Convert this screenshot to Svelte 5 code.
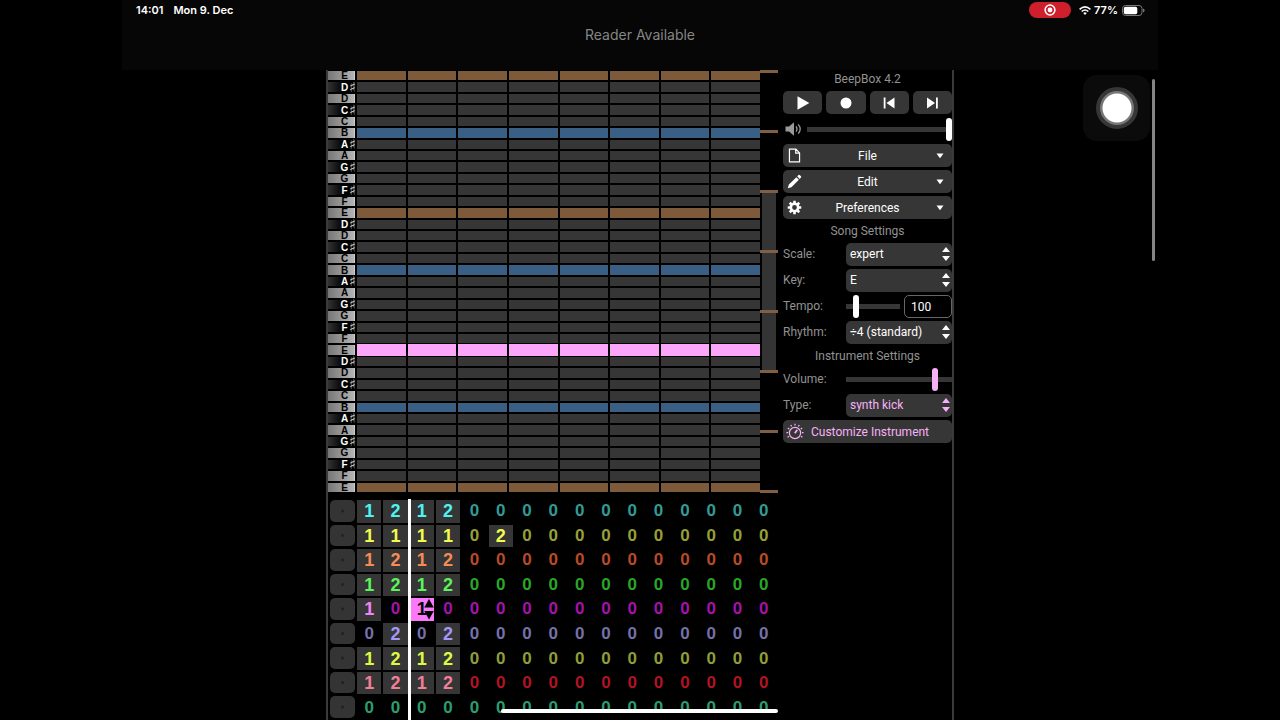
<script>
  const octave = ['E', 'D♯', 'D', 'C♯', 'C', 'B', 'A♯', 'A', 'G♯', 'G', 'F♯', 'F'];
  const keys = [...octave, ...octave, ...octave, 'E'];
  const beats = Array.from({ length: 8 }, (_, i) => i);
  const octaveGaps = Array.from({ length: 7 }, (_, i) => i);

  function rowKind(name, i) {
    if (i === 24) return 'pin';
    if (name === 'E') return 'root';
    if (name === 'B') return 'fifth';
    return '';
  }

  const channels = [
    { dim: '#329a94', bright: '#4df3f3', bars: '1212' },
    { dim: '#979f35', bright: '#f2fb4e', bars: '111102' },
    { dim: '#b84b27', bright: '#f68b55', bars: '1212' },
    { dim: '#2aa52a', bright: '#5df35d', bars: '1212' },
    { dim: '#a313a8', bright: '#f283f6', bars: '101' },
    { dim: '#7570a9', bright: '#a397f7', bars: '0202' },
    { dim: '#8f9d38', bright: '#dcfa42', bars: '1212' },
    { dim: '#b01422', bright: '#f27f98', bars: '1212' },
    { dim: '#2c9d6e', bright: '#4df3a8', bars: '' }
  ];
  const rows = channels.map((c) => ({ ...c, bars: c.bars.padEnd(16, '0').split('') }));
  const isCursor = (r, b) => r === 4 && b === 2;
</script>

{#snippet stepper()}
  <svg class="stepper" viewBox="0 0 8 16" aria-hidden="true"><path d="M0 6L4 1L8 6ZM0 10H8L4 15Z" fill="currentColor" /></svg>
{/snippet}

{#snippet caret()}
  <svg class="caret" viewBox="0 0 8 6" aria-hidden="true"><path d="M0.5 0.5H7.5L4 5.2Z" fill="currentColor" /></svg>
{/snippet}

<div class="page">
  <header>
    <div class="status">
      <span>14:01</span><span class="date">Mon 9. Dec</span>
      <span class="rec">
        <svg viewBox="0 0 12 12" width="12" height="12" aria-hidden="true"><circle cx="6" cy="6" r="4.9" fill="none" stroke="#fff" stroke-width="1.5" /><circle cx="6" cy="6" r="2.4" fill="#fff" /></svg>
      </span>
      <svg class="wifi" viewBox="0 0 12 9" aria-hidden="true">
        <g fill="none" stroke="#fff" stroke-width="1.6"><path d="M0.6 3.3Q6 -1.6 11.4 3.3" /><path d="M2.7 5.5Q6 2.5 9.3 5.5" /></g>
        <path d="M4.2 7Q6 5.6 7.8 7L6 8.9Z" fill="#fff" />
      </svg>
      <span>77%</span>
      <svg class="battery" viewBox="0 0 23 11" aria-hidden="true">
        <rect x="0.5" y="0.5" width="19.5" height="10" rx="3" fill="none" stroke="#777" />
        <rect x="1.8" y="1.8" width="13.5" height="7.4" rx="1.8" fill="#fff" />
        <path d="M21 3.6Q22.6 4.2 22.6 5.5Q22.6 6.8 21 7.4Z" fill="#777" />
      </svg>
    </div>
    <div class="reader">Reader Available</div>
  </header>

  <main>
    <section class="tracks">
      <div class="roll">
        <div class="keys">
          {#each keys as name}
            <div class="key" class:black={name.length > 1}><b>{name[0]}</b>{#if name.length > 1}<i>♯</i>{/if}</div>
          {/each}
        </div>
        <div class="notes">
          {#each keys as name, i}
            <div class="lane {rowKind(name, i)}">
              {#each beats as beat (beat)}<span></span>{/each}
            </div>
          {/each}
        </div>
        <div class="octaves">
          {#each octaveGaps as g}
            <div class="notch"></div>
            <div class="span" class:shown={g >= 2 && g <= 4}></div>
          {/each}
          <div class="notch"></div>
        </div>
      </div>

      <div class="patterns">
        {#each rows as row, r}
          <div class="channel" style:--dim={row.dim} style:--bright={row.bright}>
            <button class="mute" aria-label="Mute channel"></button>
            {#each row.bars as n, b}
              <div class="bar" class:on={n !== '0'} class:cursor={isCursor(r, b)}>
                {n}
                {#if isCursor(r, b)}
                  <svg viewBox="0 0 10 22" aria-hidden="true"><path d="M0 9L5 0L10 9ZM0 12.5H10L5 21.5Z" fill="#000" /></svg>
                {/if}
              </div>
            {/each}
          </div>
        {/each}
        <div class="playhead"></div>
      </div>
    </section>

    <aside>
      <h1>BeepBox 4.2</h1>
      <div class="transport">
        <button aria-label="Play"><svg viewBox="0 0 16 16"><path d="M2.5 1.3L14.3 8L2.5 14.7Z" /></svg></button>
        <button aria-label="Record"><svg viewBox="0 0 16 16"><circle cx="8" cy="8" r="5.5" /></svg></button>
        <button aria-label="Previous bar"><svg viewBox="0 0 16 16"><path d="M2.7 2.5H4.5V13.5H2.7ZM13.5 2.5V13.5L5.5 8Z" /></svg></button>
        <button aria-label="Next bar"><svg viewBox="0 0 16 16"><path d="M3 2.5L11 8L3 13.5ZM12 2.5H13.8V13.5H12Z" /></svg></button>
      </div>
      <div class="master">
        <svg viewBox="0 0 17 14" aria-hidden="true">
          <path d="M0.5 4.5H4L9 0.3V13.7L4 9.5H0.5Z" fill="#999" />
          <path d="M11 4.3Q13 7 11 9.7M13.2 2.3Q17.2 7 13.2 11.7" fill="none" stroke="#999" stroke-width="1.3" />
        </svg>
        <input type="range" aria-label="Main volume" min="0" max="75" value="75" />
      </div>
      <div class="field menu">
        <svg class="lead" viewBox="0 0 16 16" aria-hidden="true"><path d="M2.6 1.2H9.5L13.4 5.2V14.8H2.6ZM9.3 1.2V5.4H13.4" fill="none" stroke="#fff" stroke-width="1.3" /></svg>
        <select aria-label="File"><option>File</option></select>
        {@render caret()}
      </div>
      <div class="field menu">
        <svg class="lead" viewBox="0 0 16 16" aria-hidden="true"><path d="M0.8 15.2L2 11.3L10 3.4L12.7 6.1L4.7 14ZM10.9 2.5L12.3 1.1Q13 0.5 13.8 1.2L14.9 2.3Q15.5 3 14.9 3.8L13.5 5.2Z" fill="#fff" /></svg>
        <select aria-label="Edit"><option>Edit</option></select>
        {@render caret()}
      </div>
      <div class="field menu">
        <svg class="lead" viewBox="0 0 16 16" aria-hidden="true">
          <circle cx="8" cy="8" r="3.9" fill="none" stroke="#fff" stroke-width="2.7" />
          <path d="M8 0.8V3.5M8 12.5V15.2M0.8 8H3.5M12.5 8H15.2M2.9 2.9L4.8 4.8M11.2 11.2L13.1 13.1M13.1 2.9L11.2 4.8M4.8 11.2L2.9 13.1" stroke="#fff" stroke-width="2.8" />
        </svg>
        <select aria-label="Preferences"><option>Preferences</option></select>
        {@render caret()}
      </div>
      <h2>Song Settings</h2>
      <div class="setting">
        <label for="scale">Scale:</label>
        <div class="field"><select id="scale"><option>expert</option></select>{@render stepper()}</div>
      </div>
      <div class="setting">
        <label for="key">Key:</label>
        <div class="field"><select id="key"><option>E</option></select>{@render stepper()}</div>
      </div>
      <div class="setting">
        <label for="tempo">Tempo:</label>
        <div class="tempo">
          <input type="range" aria-label="Tempo slider" min="30" max="500" value="100" />
          <input id="tempo" class="number" type="text" inputmode="numeric" value="100" />
        </div>
      </div>
      <div class="setting">
        <label for="rhythm">Rhythm:</label>
        <div class="field"><select id="rhythm"><option>÷4 (standard)</option></select>{@render stepper()}</div>
      </div>
      <h2>Instrument Settings</h2>
      <div class="setting tinted">
        <label for="volume">Volume:</label>
        <input id="volume" type="range" min="0" max="100" value="86" />
      </div>
      <div class="setting tinted">
        <label for="type">Type:</label>
        <div class="field"><select id="type"><option>synth kick</option></select>{@render stepper()}</div>
      </div>
      <button class="customize">
        <svg viewBox="0 0 18 18" aria-hidden="true">
          <circle cx="9" cy="10" r="5.6" fill="none" stroke="currentColor" stroke-width="1.2" />
          <path d="M8.8 10.2L11.3 6.8" stroke="currentColor" stroke-width="1.8" />
          <path d="M9 0.8V2.6M4.8 2L5.6 3.5M13.2 2L12.4 3.5M1.8 5.1L3.3 6M16.2 5.1L14.7 6M0.4 9.6H2.1M17.6 9.6H15.9M1.6 14.2L3.1 13.3M16.4 14.2L14.9 13.3" stroke="currentColor" stroke-width="1.3" />
        </svg>
        <span>Customize Instrument</span>
      </button>
    </aside>
  </main>

  <div class="touch"><span></span></div>
  <div class="scrollbar"></div>
  <div class="home"></div>
</div>

<style>
  :global(body) { background: #000; }
  .page {
    position: relative;
    display: flex;
    flex-direction: column;
    height: 100vh;
    overflow: hidden;
    background: #000;
    color: #fff;
    font-family: Roboto, sans-serif;
    font-size: 12px;
  }
  .page :global(*) { box-sizing: border-box; }
  header {
    width: 100%;
    max-width: 1036px;
    height: 70px;
    margin: 0 auto;
    flex: none;
    background: #060606;
    font-family: Inter, sans-serif;
  }
  .status {
    display: flex;
    align-items: center;
    height: 20px;
    padding: 0 13px 0 14px;
    font-size: 11px;
    font-weight: 600;
  }
  .date { margin-left: 10px; }
  .rec {
    display: grid;
    place-items: center;
    width: 42px;
    height: 16px;
    margin: 0 8px 0 auto;
    border-radius: 8px;
    background: #cf1f2c;
  }
  .wifi { width: 12px; height: 9px; margin-right: 3px; }
  .battery { width: 23px; height: 11px; margin-left: 4px; }
  .reader { margin-top: 5px; text-align: center; font-size: 14px; line-height: 20px; color: #858585; }

  main {
    display: flex;
    gap: 5px;
    flex: 1;
    width: 100%;
    max-width: 628px;
    min-height: 0;
    margin: 0 auto;
    border: 0 solid #3a3a3a;
    border-width: 0 2px;
  }
  .tracks { flex: 1; display: flex; flex-direction: column; gap: 6px; min-width: 0; }
  .roll { display: grid; grid-template-columns: 29px 1fr 18px; height: 423px; flex: none; }
  .keys, .notes { display: grid; grid-template-columns: minmax(0, 1fr); grid-template-rows: repeat(37, 1fr); min-height: 0; }
  .key {
    display: flex;
    align-items: center;
    min-height: 0;
    margin: 1px 2px 1px 0;
    padding-left: 12px;
    border-right: 1px solid #ccc;
    background: linear-gradient(90deg, #777, #b4b4b4);
    color: #000;
    font-family: "Liberation Sans", sans-serif;
    font-size: 10px;
    line-height: 9px;
  }
  .key b { flex: none; width: 9px; text-align: center; }
  .key.black { border-color: transparent; background: linear-gradient(90deg, #333, #000 60%); color: #fff; }
  .key i { font: normal 14px/9px "DejaVu Sans", sans-serif; color: #ccc; }
  .lane { display: grid; grid-template-columns: repeat(8, 1fr); column-gap: 2px; min-height: 0; padding: 1px 0; --fill: #363636; }
  .lane span { background: var(--fill); }
  .lane.root { --fill: #7d5a3a; }
  .lane.fifth { --fill: #3a5f85; }
  .lane.pin { --fill: #fca6fb; padding: 0; }
  .octaves { display: flex; flex-direction: column; }
  .notch { height: 3px; background: #805f45; }
  .span { flex: 1; margin: 0 2px; }
  .span.shown { background: #343434; }

  .patterns { position: relative; display: grid; grid-auto-rows: 1fr; flex: 1; min-height: 0; padding-right: 1px; }
  .channel { display: grid; grid-template-columns: 28px repeat(16, 1fr); min-height: 0; }
  .mute { margin: 1px 1px 2px 2px; padding: 0; border: 0; border-radius: 5px; background: radial-gradient(circle, #222 1px, #343434 2px); }
  .bar {
    position: relative;
    display: grid;
    place-items: center;
    min-height: 0;
    margin: 1px;
    color: var(--dim);
    font: bold 17px/22px "Liberation Sans", sans-serif;
  }
  .bar.on { background: #363636; color: var(--bright); font-size: 18px; }
  .bar.cursor { background: #fb78fb; color: #000; }
  .bar svg { position: absolute; top: 1px; right: 0; width: 10px; height: 21px; }
  .playhead { position: absolute; top: 0; bottom: 0; left: 80px; width: 3px; background: #fff; }

  aside { display: flex; flex-direction: column; gap: 3px; width: 169px; flex: none; }
  h1, h2 { margin: 0; font-size: 12px; font-weight: 400; line-height: 18px; text-align: center; color: #929292; }
  button, select, input { font: inherit; color: inherit; }
  .transport { display: grid; grid-template-columns: repeat(4, 1fr); gap: 4px; }
  .transport button, .customize { display: flex; align-items: center; justify-content: center; height: 23px; padding: 0; border: 0; border-radius: 5px; background: #363636; }
  .transport svg { width: 16px; height: 16px; fill: #fff; }
  .master { display: flex; align-items: center; gap: 5px; height: 24px; padding-left: 2px; }
  .master svg { width: 17px; height: 14px; flex: none; }
  .field { position: relative; height: 23px; }
  select {
    display: block;
    width: 100%;
    height: 23px;
    padding: 0 4px 1px;
    border: 0;
    border-radius: 5px;
    background: #363636;
    appearance: none;
    font-size: 12px;
  }
  .menu select { padding-bottom: 0; text-align: center; text-align-last: center; }
  .lead { position: absolute; left: 4px; top: 4px; width: 15px; height: 15px; }
  .caret { position: absolute; right: 8px; top: 9px; width: 8px; height: 6px; }
  .stepper { position: absolute; right: 2px; top: 3px; width: 8px; height: 16px; }
  .setting { display: grid; grid-template-columns: 63px 1fr; align-items: center; height: 23px; }
  .setting label { padding-bottom: 1px; color: #929292; }
  .tinted .field, .tinted input, .customize { color: #f6b2f6; }
  .tempo { display: grid; grid-template-columns: 1fr 48px; gap: 4px; }
  .number { width: 100%; height: 23px; padding: 0 6px; border: 1px solid #666; border-radius: 5px; background: #000; }
  input[type='range'] { display: block; width: 100%; min-width: 0; height: 23px; margin: 0; background: transparent; appearance: none; }
  input[type='range']::-webkit-slider-runnable-track { height: 5px; background: #363636; }
  input[type='range']::-webkit-slider-thumb { width: 6px; height: 23px; margin-top: -9px; border-radius: 3px; background: currentColor; appearance: none; }
  .customize { justify-content: flex-start; gap: 7px; padding: 0 3px; }
  .customize svg { width: 18px; height: 18px; }

  .touch {
    position: absolute;
    top: 75px;
    right: 130px;
    display: grid;
    place-items: center;
    width: 67px;
    height: 66px;
    border-radius: 14px;
    background: #0b0b0b;
  }
  .touch span { width: 42px; height: 42px; border: 4px solid #363636; border-radius: 50%; background: radial-gradient(circle, #fff 14px, #777 15px); }
  .scrollbar { position: absolute; top: 79px; right: 125px; width: 3px; height: 182px; border-radius: 2px; background: #858585; }
  .home { position: absolute; bottom: 7px; left: 50%; width: 277px; height: 4px; margin-left: -139px; border-radius: 2px; background: #fff; }
</style>
